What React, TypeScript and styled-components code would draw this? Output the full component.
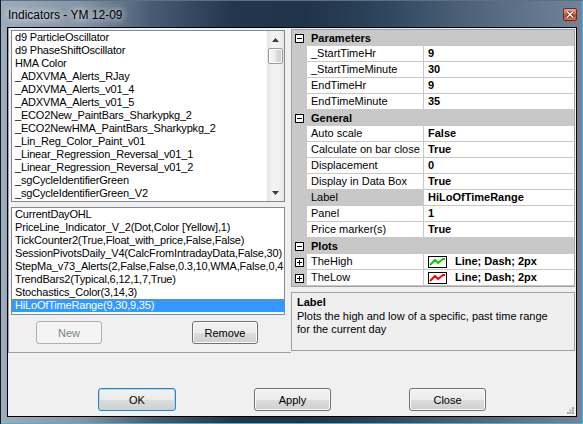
import React from "react";
import styled, { createGlobalStyle } from "styled-components";

const LINE = "#c8c8c8";

const GlobalStyle = createGlobalStyle`
  html, body {
    margin: 0;
    padding: 0;
    background: #1e3044;
  }
  body {
    font-family: "Liberation Sans", Arial, sans-serif;
    font-size: 11px;
    color: #000;
  }
  * {
    box-sizing: border-box;
  }
`;

const Window = styled.div`
  width: 583px;
  height: 424px;
  display: flex;
  flex-direction: column;
  background: linear-gradient(
    90deg,
    #9eacbb 0%,
    #8494a6 14%,
    #475c73 26%,
    #22364c 40%,
    #1f3349 52%,
    #2f465e 66%,
    #4d6279 80%,
    #71849a 100%
  );
  box-shadow: inset 1px 0 0 #0f1b27, inset 0 1px 0 #5d6f82,
    inset -1px 0 0 #3fb6dc, inset 0 -1px 0 #3fb6dc;
`;

const TitleBar = styled.div`
  height: 27px;
  display: flex;
  justify-content: space-between;
  align-items: flex-start;
  padding: 0 6px 0 8px;
`;

const Title = styled.div`
  margin-top: 8px;
  font-size: 12px;
  line-height: 14px;
  color: #000;
  text-shadow: 0 0 6px rgba(255, 255, 255, 0.9), 0 0 10px rgba(255, 255, 255, 0.6);
`;

const CloseButton = styled.div`
  margin-top: 8px;
  width: 14px;
  height: 13px;
  border: 1px solid #6b2b1c;
  border-radius: 2px;
  display: flex;
  align-items: center;
  justify-content: center;
  background: linear-gradient(#eaa48f 0%, #d96a4f 48%, #c5411f 52%, #dc7257 100%);
`;

const Client = styled.div`
  flex: 1;
  margin: 0 6px 7px 7px;
  border: 1px solid #000;
  background: #f0f0f0;
  display: flex;
  flex-direction: column;
`;

const Split = styled.div`
  display: flex;
  height: 325px;
`;

const LeftPane = styled.div`
  width: 283px;
  height: 325px;
  border-left: 1px solid #a0a0a0;
  border-bottom: 1px solid #a0a0a0;
  padding: 2px 6px 0 2px;
  display: flex;
  flex-direction: column;
`;

const ListBox = styled.div<{ $h: number; $gap?: number }>`
  height: ${(p) => p.$h}px;
  margin-top: ${(p) => p.$gap ?? 0}px;
  border: 1px solid #828790;
  background: #fff;
  display: flex;
  overflow: hidden;
`;

const Items = styled.div`
  flex: 1;
  min-width: 0;
`;

const Item = styled.div<{ $selected?: boolean }>`
  height: 13px;
  line-height: 13px;
  padding-left: 3px;
  letter-spacing: -0.18px;
  white-space: nowrap;
  overflow: hidden;
  background: ${(p) => (p.$selected ? "#3399ff" : "transparent")};
  color: ${(p) => (p.$selected ? "#fff" : "#000")};
`;

const ScrollBar = styled.div`
  width: 17px;
  display: flex;
  flex-direction: column;
  background: linear-gradient(90deg, #e3e3e3, #f2f2f2 30%, #f2f2f2 70%, #e6e6e6);
`;

const Arrow = styled.div`
  height: 17px;
  display: flex;
  align-items: center;
  justify-content: center;
`;

const Thumb = styled.div`
  height: 16px;
  margin: 0 1px;
  border: 1px solid #9a9a9a;
  border-radius: 2px;
  background: linear-gradient(90deg, #f7f7f7 0%, #ececec 50%, #dcdcdc 51%, #d0d0d0 100%);
  box-shadow: inset 0 0 0 1px #fbfbfb;
`;

const Track = styled.div`
  flex: 1;
`;

const PaneButtons = styled.div`
  display: flex;
  gap: 90px;
  margin-top: 6px;
  padding-left: 25px;
`;

const Button = styled.button<{ $w: number; $focused?: boolean }>`
  width: ${(p) => p.$w}px;
  height: 23px;
  padding: 0;
  font-family: "Liberation Sans", Arial, sans-serif;
  font-size: 11px;
  color: ${(p) => (p.disabled ? "#838383" : "#000")};
  border: 1px solid ${(p) => (p.disabled ? "#adb2b5" : p.$focused ? "#3c7fb1" : "#707070")};
  border-radius: 3px;
  background: ${(p) =>
    p.disabled
      ? "#f4f4f4"
      : "linear-gradient(#f2f2f2 0%, #ebebeb 50%, #dddddd 51%, #cfcfcf 100%)"};
  box-shadow: inset 0 0 0 1px
    ${(p) => (p.disabled ? "#f4f4f4" : p.$focused ? "#9fdcf7" : "#fbfbfb")};
`;

const RightPane = styled.div`
  flex: 1;
  padding: 1px 1px 0 0;
  display: flex;
  flex-direction: column;
`;

const Grid = styled.div`
  border: 1px solid #a0a0a0;
  background: #fff;
  display: flex;
  flex-direction: column;
`;

const CategoryRow = styled.div`
  height: 16px;
  display: grid;
  grid-template-columns: 15px 1fr;
  background: ${LINE};
  font-weight: bold;
  line-height: 16px;
`;

const PropRow = styled.div`
  height: 16px;
  display: grid;
  grid-template-columns: 15px 117px 1fr;
`;

const Margin = styled.div`
  background: ${LINE};
  display: flex;
  align-items: center;
  justify-content: center;
`;

const CategoryLabel = styled.div`
  padding-left: 4px;
`;

const NameCell = styled.div<{ $selected?: boolean }>`
  border-right: 1px solid ${LINE};
  border-bottom: 1px solid ${LINE};
  background: ${(p) => (p.$selected ? LINE : "#fff")};
  padding-left: 4px;
  line-height: 15px;
  white-space: nowrap;
  overflow: hidden;
`;

const ValueCell = styled.div`
  border-bottom: 1px solid ${LINE};
  padding-left: 4px;
  line-height: 15px;
  font-weight: bold;
  white-space: nowrap;
  overflow: hidden;
  display: flex;
  align-items: center;
  gap: 8px;
`;

const Description = styled.div`
  height: 59px;
  margin-top: 5px;
  border: 1px solid #a0a0a0;
  background: #efefef;
  padding: 3px 5px 0;
  line-height: 13px;
`;

const DescTitle = styled.div`
  font-weight: bold;
  margin-bottom: 1px;
`;

const Footer = styled.div`
  flex: 1;
  display: flex;
  align-items: flex-start;
  gap: 78px;
  padding: 35px 0 0 90px;
`;

const Grip = styled.svg`
  margin-left: auto;
  align-self: flex-end;
  margin-right: 2px;
  margin-bottom: 2px;
`;

const catalog = [
  "d9 ParticleOscillator",
  "d9 PhaseShiftOscillator",
  "HMA Color",
  "_ADXVMA_Alerts_RJay",
  "_ADXVMA_Alerts_v01_4",
  "_ADXVMA_Alerts_v01_5",
  "_ECO2New_PaintBars_Sharkypkg_2",
  "_ECO2NewHMA_PaintBars_Sharkypkg_2",
  "_Lin_Reg_Color_Paint_v01",
  "_Linear_Regression_Reversal_v01_1",
  "_Linear_Regression_Reversal_v01_2",
  "_sgCycleIdentifierGreen",
  "_sgCycleIdentifierGreen_V2",
];

const applied = [
  "CurrentDayOHL",
  "PriceLine_Indicator_V_2(Dot,Color [Yellow],1)",
  "TickCounter2(True,Float_with_price,False,False)",
  "SessionPivotsDaily_V4(CalcFromIntradayData,False,30)",
  "StepMa_v73_Alerts(2,False,False,0.3,10,WMA,False,0,4,True)",
  "TrendBars2(Typical,6,12,1,7,True)",
  "Stochastics_Color(3,14,3)",
  "HiLoOfTimeRange(9,30,9,35)",
];

type Prop = { name: string; value: string; selected?: boolean; plot?: string };

const sections: { title: string; props: Prop[] }[] = [
  {
    title: "Parameters",
    props: [
      { name: "_StartTimeHr", value: "9" },
      { name: "_StartTimeMinute", value: "30" },
      { name: "EndTimeHr", value: "9" },
      { name: "EndTimeMinute", value: "35" },
    ],
  },
  {
    title: "General",
    props: [
      { name: "Auto scale", value: "False" },
      { name: "Calculate on bar close", value: "True" },
      { name: "Displacement", value: "0" },
      { name: "Display in Data Box", value: "True" },
      { name: "Label", value: "HiLoOfTimeRange", selected: true },
      { name: "Panel", value: "1" },
      { name: "Price marker(s)", value: "True" },
    ],
  },
  {
    title: "Plots",
    props: [
      { name: "TheHigh", value: "Line; Dash; 2px", plot: "#00d000" },
      { name: "TheLow", value: "Line; Dash; 2px", plot: "#ff0000" },
    ],
  },
];

function ToggleBox({ open }: { open: boolean }) {
  return (
    <svg width="9" height="9" viewBox="0 0 9 9">
      <rect x="0.5" y="0.5" width="8" height="8" fill="#fff" stroke="#000" />
      <line x1="2" y1="4.5" x2="7" y2="4.5" stroke="#000" />
      {!open && <line x1="4.5" y1="2" x2="4.5" y2="7" stroke="#000" />}
    </svg>
  );
}

function PlotSwatch({ color }: { color: string }) {
  return (
    <svg width="19" height="12" viewBox="0 0 19 12">
      <rect x="0.5" y="0.5" width="18" height="11" fill="#fff" stroke="#000" />
      <polyline
        points="2,9 7,4 10,7 15,3 17,3"
        fill="none"
        stroke={color}
        strokeWidth="2"
      />
    </svg>
  );
}

function ArrowGlyph({ up }: { up: boolean }) {
  return (
    <svg width="7" height="4" viewBox="0 0 7 4">
      <polygon points={up ? "3.5,0 7,4 0,4" : "0,0 7,0 3.5,4"} fill="#3c3c3c" />
    </svg>
  );
}

export default function App() {
  return (
    <>
      <GlobalStyle />
      <Window>
        <TitleBar>
          <Title>Indicators - YM 12-09</Title>
          <CloseButton>
            <svg width="8" height="7" viewBox="0 0 8 7">
              <path d="M1 0.5 L7 6.5 M7 0.5 L1 6.5" stroke="#5a1a0e" strokeWidth="3" />
              <path d="M1 0.5 L7 6.5 M7 0.5 L1 6.5" stroke="#fff" strokeWidth="1.6" />
            </svg>
          </CloseButton>
        </TitleBar>
        <Client>
          <Split>
            <LeftPane>
              <ListBox $h={172}>
                <Items>
                  {catalog.map((name) => (
                    <Item key={name}>{name}</Item>
                  ))}
                </Items>
                <ScrollBar>
                  <Arrow>
                    <ArrowGlyph up />
                  </Arrow>
                  <Thumb />
                  <Track />
                  <Arrow>
                    <ArrowGlyph up={false} />
                  </Arrow>
                </ScrollBar>
              </ListBox>
              <ListBox $h={108} $gap={5}>
                <Items>
                  {applied.map((name, i) => (
                    <Item key={name} $selected={i === applied.length - 1}>
                      {name}
                    </Item>
                  ))}
                </Items>
              </ListBox>
              <PaneButtons>
                <Button $w={66} disabled>
                  New
                </Button>
                <Button $w={66}>Remove</Button>
              </PaneButtons>
            </LeftPane>
            <RightPane>
              <Grid>
                {sections.map((section) => (
                  <React.Fragment key={section.title}>
                    <CategoryRow>
                      <Margin>
                        <ToggleBox open />
                      </Margin>
                      <CategoryLabel>{section.title}</CategoryLabel>
                    </CategoryRow>
                    {section.props.map((prop) => (
                      <PropRow key={prop.name}>
                        <Margin>{prop.plot && <ToggleBox open={false} />}</Margin>
                        <NameCell $selected={prop.selected}>{prop.name}</NameCell>
                        <ValueCell>
                          {prop.plot && <PlotSwatch color={prop.plot} />}
                          {prop.value}
                        </ValueCell>
                      </PropRow>
                    ))}
                  </React.Fragment>
                ))}
              </Grid>
              <Description>
                <DescTitle>Label</DescTitle>
                <div>Plots the high and low of a specific, past time range</div>
                <div>for the current day</div>
              </Description>
            </RightPane>
          </Split>
          <Footer>
            <Button $w={78} $focused>
              OK
            </Button>
            <Button $w={77}>Apply</Button>
            <Button $w={77}>Close</Button>
            <Grip width="7" height="7" viewBox="0 0 7 7">
              {[
                [5, 0],
                [5, 2.5],
                [2.5, 2.5],
                [5, 5],
                [2.5, 5],
                [0, 5],
              ].map(([x, y]) => (
                <rect key={`${x}-${y}`} x={x} y={y} width="2" height="2" fill="#a8a8a8" />
              ))}
            </Grip>
          </Footer>
        </Client>
      </Window>
    </>
  );
}
